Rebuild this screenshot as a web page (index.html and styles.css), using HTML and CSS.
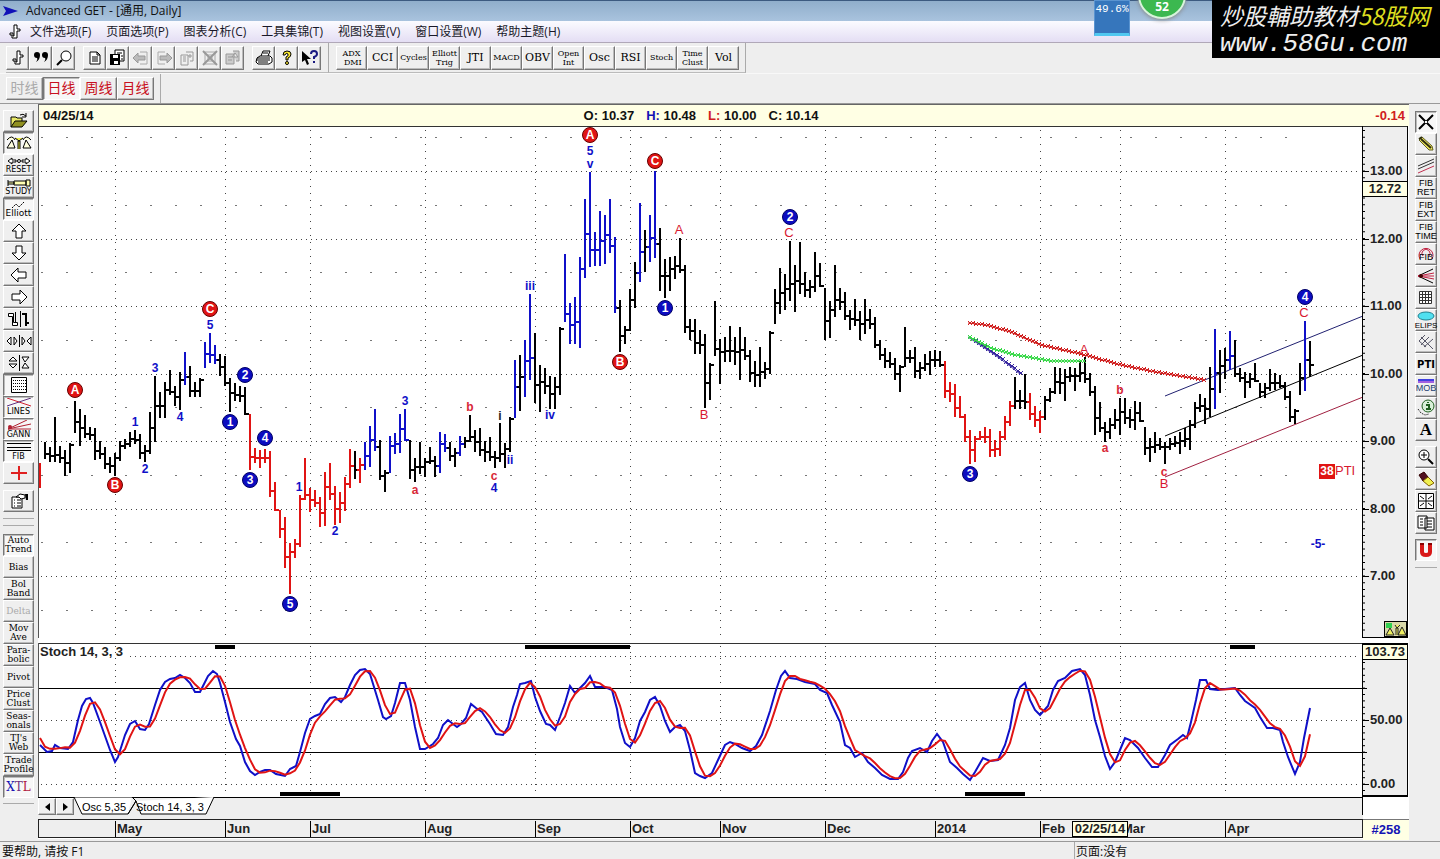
FILE: index.html
```html
<!DOCTYPE html>
<html lang="zh-CN">
<head>
  <meta charset="UTF-8">
  <title>Advanced GET - [通用, Daily]</title>
  <link rel="stylesheet" href="styles.css">
</head>
<body>
  <header class="titlebar">
    <svg width="16" height="10" viewBox="0 0 16 10"><path d="M0 0L15 5L0 10L3 5Z" fill="#1010b8"/></svg>
    <span>Advanced GET - [通用, Daily]</span>
  </header>

  <nav class="menu">
    <svg class="logo" width="12" height="16" viewBox="0 0 12 16"><path d="M5 1H8V5H11V7H8V14H3V11H1V9H4V12H5Z" fill="#fff" stroke="#000"/></svg>
    <a href="#">文件选项(F)</a>
    <a href="#">页面选项(P)</a>
    <a href="#">图表分析(C)</a>
    <a href="#">工具集锦(T)</a>
    <a href="#">视图设置(V)</a>
    <a href="#">窗口设置(W)</a>
    <a href="#">帮助主题(H)</a>
  </nav>

  <!-- floating widgets -->
  <div class="meter">49.6%</div>
  <div class="ball">52</div>
  <div class="watermark">
    <div class="wm-cn">炒股輔助教材<b>58股网</b></div>
    <div class="wm-url">www.58Gu.com</div>
  </div>

  <div class="toolbar">
    <div class="group main-group">
      <div class="set">
        <button aria-label="Chart"><svg width="18" height="18" viewBox="0 0 18 18"><path d="M8 2H11V6H14V8H11V15H6V12H4V10H7V13H8Z" fill="#fff" stroke="#000"/></svg></button>
        <button aria-label="Quote"><svg width="18" height="18" viewBox="0 0 18 18"><path d="M2 6a3 3 0 1 1 6 0Q8 11 4 13Q6 10 5 9Q2 9 2 6ZM10 6a3 3 0 1 1 6 0Q16 11 12 13Q14 10 13 9Q10 9 10 6Z"/></svg></button>
        <button aria-label="Find"><svg width="18" height="18" viewBox="0 0 18 18"><circle cx="11" cy="7" r="5" fill="#fff" stroke="#000"/><path d="M7 11L2 16" stroke="#000" stroke-width="2"/></svg></button>
      </div>
      <div class="set">
        <button aria-label="New"><svg width="18" height="18" viewBox="0 0 18 18"><path d="M4 3H11L14 6V15H4ZM11 3V6H14M6 8H12M6 10H12M6 12H12" fill="#fff" stroke="#000"/></svg></button>
        <button aria-label="Save"><svg width="18" height="18" viewBox="0 0 18 18"><path d="M6 1H15V12H6Z" fill="#fff" stroke="#000"/><path d="M1 5H11V16H1Z"/><path d="M4 6H9V9H4ZM5 12H9V15H5Z" fill="#fff"/><path d="M8 4H13M12 7H14M12 10H14" stroke="#000"/></svg></button>
        <button aria-label="Back" disabled><svg width="18" height="18" viewBox="0 0 18 18"><path d="M8 3H15V15H8" fill="none" stroke="#aaa"/><path d="M1 9L6 4V7H13V11H6V14Z" fill="#bbb" stroke="#999"/></svg></button>
        <button aria-label="Forward" disabled><svg width="18" height="18" viewBox="0 0 18 18"><path d="M10 3H3V15H10" fill="none" stroke="#aaa"/><path d="M17 9L12 4V7H5V11H12V14Z" fill="#bbb" stroke="#999"/></svg></button>
        <button aria-label="Copy page" disabled><svg width="18" height="18" viewBox="0 0 18 18"><path d="M3 6H10V16H3ZM5 8H8M5 10H8M5 12H8M8 3H15V12H12M12 5V9M10 7H14" fill="none" stroke="#999"/></svg></button>
        <button aria-label="Delete page" disabled><svg width="18" height="18" viewBox="0 0 18 18"><path d="M4 3H14V15H4ZM6 6H12M6 9H12M6 12H12" fill="none" stroke="#aaa"/><path d="M2 2L16 16M16 2L2 16" stroke="#999" stroke-width="2"/></svg></button>
        <button aria-label="Page" disabled><svg width="18" height="18" viewBox="0 0 18 18"><path d="M2 5H10V15H2ZM4 8H8M4 11H8M9 2H15V12H12M11 4L8 8H14Z" fill="#ccc" stroke="#999"/></svg></button>
      </div>
      <div class="set">
        <button aria-label="Print"><svg width="18" height="18" viewBox="0 0 18 18"><path d="M6 7L8 2H15L13 7M2 9L5 7H15L17 9V13L14 15H3L1 13Z" fill="#fff" stroke="#000"/><path d="M1 11H15M3 13H13M8 4H13M2 9H15" stroke="#000"/></svg></button>
        <button aria-label="Help"><svg width="18" height="18" viewBox="0 0 18 18"><path d="M5 6Q5 2 9 2Q13 2 13 5Q13 8 10 9V11H8V8Q11 7 10 5Q8 3 7 6Z" fill="#ffee30" stroke="#000"/><circle cx="9" cy="14" r="1.500" fill="#ffee30" stroke="#000"/></svg></button>
        <button aria-label="What is this"><svg width="18" height="18" viewBox="0 0 18 18"><path d="M1 2V13L4 11L6 16L8 15L6 10H10Z"/><path d="M10 5Q10 2 13 2Q16 2 16 5Q16 7 13 8V10M13 12V14" fill="none" stroke="#1a1a80" stroke-width="2"/></svg></button>
      </div>
    </div>
    <div class="group study-group">
      <button>ADX<br>&nbsp;DMI</button>
      <button class="big">CCI</button>
      <button>Cycles</button>
      <button>Elliott<br>Trig</button>
      <button class="big">JTI</button>
      <button>MACD</button>
      <button class="big">OBV</button>
      <button>Open<br>Int</button>
      <button class="big">Osc</button>
      <button class="big">RSI</button>
      <button>Stoch</button>
      <button>Time<br>Clust</button>
      <button class="big">Vol</button>
    </div>
  </div>

  <div class="toolbar periods">
    <div class="group">
      <button disabled>时线</button>
      <button class="pressed">日线</button>
      <button>周线</button>
      <button>月线</button>
    </div>
  </div>

  <main>
    <aside class="left">
      <div class="stack">
        <button aria-label="Open"><svg width="24" height="18" viewBox="0 0 24 18"><path d="M4 15V5H9L10 6H15V9" fill="#e8e868" stroke="#000"/><path d="M4 15L8 9H20L15 15Z" fill="#909020" stroke="#000"/><path d="M13 3Q16 1 19 4M19 1V5H15" fill="none" stroke="#000"/></svg></button>
        <button class="pressed" aria-label="Trees"><svg width="26" height="18" viewBox="0 0 26 18"><path d="M1 14L6 6L9 14ZM17 14L20 6L25 14ZM1 6Q6 0 9 6M17 6Q20 0 25 6" fill="#ffffe0" stroke="#000"/><path d="M9 4L13 7L17 4M12 15V7H14V15" fill="#e8e840" stroke="#000"/></svg></button>
        <button><svg width="24" height="8" viewBox="0 0 24 8"><path d="M1 4L5 1V3H9V5H5V7ZM23 4L19 1V3H15V5H19V7Z" fill="#fff" stroke="#000"/><circle cx="12" cy="4" r="1.500" fill="none" stroke="#000"/></svg><small>RESET</small></button>
        <button><svg width="24" height="8" viewBox="0 0 24 8"><path d="M1 1V7M1 3H7V5H1M7 2H19V6H7ZM19 1H23V7H19Z" fill="#ffffb0" stroke="#000"/></svg><small>STUDY</small></button>
        <button class="pressed"><svg width="24" height="8" viewBox="0 0 24 8"><path d="M5 7L9 3L12 6L17 1" fill="none" stroke="#000" stroke-dasharray="2 1"/></svg><small class="low">Elliott</small></button>
        <button aria-label="Up"><svg width="18" height="16" viewBox="0 0 18 16"><path d="M9 1L16 8H12V15H6V8H2Z" fill="#fff" stroke="#000"/></svg></button>
        <button aria-label="Down"><svg width="18" height="16" viewBox="0 0 18 16"><path d="M9 15L16 8H12V1H6V8H2Z" fill="#fff" stroke="#000"/></svg></button>
        <button aria-label="Left"><svg width="18" height="16" viewBox="0 0 18 16"><path d="M1 8L8 1V5H16V11H8V15Z" fill="#fff" stroke="#000"/></svg></button>
        <button aria-label="Right"><svg width="18" height="16" viewBox="0 0 18 16"><path d="M17 8L10 1V5H2V11H10V15Z" fill="#fff" stroke="#000"/></svg></button>
        <button aria-label="Bar style"><svg width="24" height="18" viewBox="0 0 24 18"><path d="M1.500 3.500H6.500V12.500H10.500V15.500H5.500V6.500H1.500ZM8.500 2V12M13.500 1V17" fill="#fff" stroke="#000"/><path d="M19 3V16M15 4H19M19 13H22" fill="none" stroke="#000" stroke-width="2"/></svg></button>
        <button aria-label="Bar spacing"><svg width="26" height="12" viewBox="0 0 26 12"><path d="M5 2V10L1 6ZM8 2V10L11 6ZM13.500 0V12M16 2V10L19 6ZM25 2V10L21 6Z" fill="#fff" stroke="#000"/></svg></button>
        <button aria-label="Bar height"><svg width="24" height="16" viewBox="0 0 24 16"><path d="M2 6H10L6 2ZM2 9H10L6 13ZM12.500 0V16M15 2H22L18 7ZM15 13H22L18 8Z" fill="#fff" stroke="#000"/></svg></button>
        <button class="pressed" aria-label="Grid"><svg width="18" height="18" viewBox="0 0 18 18"><path d="M1.500 1.500H16.500V16.500H1.500Z" fill="#fff" stroke="#000"/><path d="M3 4.500H16M3 7.500H16M3 10.500H16M3 13.500H16" stroke="#000" stroke-dasharray="1 1"/></svg></button>
        <button class="pressed"><svg width="24" height="9" viewBox="0 0 24 9"><path d="M0 0L24 8" stroke="#d02030"/><path d="M0 8L24 0" stroke="#603080"/></svg><small>LINES</small></button>
        <button class="pressed"><svg width="24" height="10" viewBox="0 0 24 10"><path d="M1 9L20 0M1 9L24 4M1 9H24" stroke="#b02030"/><circle cx="3" cy="7" r="2" fill="#b02030"/></svg><small>GANN</small></button>
        <button class="pressed"><svg width="24" height="10" viewBox="0 0 24 10"><path d="M0 1.500H24M0 5.500H24M0 8.500H24" stroke="#000"/></svg><small>FIB</small></button>
        <button aria-label="Crosshair"><svg width="18" height="16" viewBox="0 0 18 16"><path d="M9 1V15M1 8H17" stroke="#e02020" stroke-width="2"/></svg></button>
      </div>
      <div class="stack props">
        <button aria-label="Properties"><svg width="20" height="18" viewBox="0 0 20 18"><path d="M3 5H13V16H3ZM5 8H6M8 8H12M5 11H6M8 11H12M5 14H6M8 14H12" fill="#fff" stroke="#000"/><path d="M7 5L11 2L16 3V6L12 7L10 5Z" fill="#fff" stroke="#000"/><path d="M16 2H19V8H17Z"/></svg></button>
      </div>
      <div class="stack studies">
        <button class="pressed">Auto<br>Trend</button>
        <button>Bias</button>
        <button>Bol<br>Band</button>
        <button disabled>Delta</button>
        <button>Mov<br>Ave</button>
        <button>Para-<br>bolic</button>
        <button>Pivot</button>
        <button>Price<br>Clust</button>
        <button>Seas-<br>onals</button>
        <button>TJ's<br>Web</button>
        <button>Trade<br>Profile</button>
        <button class="pressed xtl"><span><i>X</i><b>T</b>L</span></button>
      </div>
    </aside>

    <section class="charts">
      <div class="quote">
        <span>04/25/14</span>
        <div class="ohlc"><span>O: 10.37</span><span><b class="blue">H:</b> 10.48</span><span><b class="red">L:</b> 10.00</span><span>C: 10.14</span></div>
        <span class="change red">-0.14</span>
      </div>
      <svg id="price" viewBox="38 126 1325 517"></svg>
      <svg id="priceAxis" viewBox="1363 126 46 517"></svg>
      <svg id="stoch" viewBox="38 643 1325 154"></svg>
      <svg id="stochAxis" viewBox="1363 643 46 154"></svg>
      <div class="tabs">
        <svg class="tab-shape" width="180" height="18" viewBox="0 0 180 18"><path d="M36 0L44 17H90L98 4L94 0ZM94 0L98 4L90 17M98 4L103 17H168L176 0" fill="#fff" stroke="#000"/></svg>
        <button class="arrow" aria-label="Previous"><svg width="5" height="8" viewBox="0 0 5 8"><path d="M5 0V8L0 4Z"/></svg></button>
        <button class="arrow" aria-label="Next"><svg width="5" height="8" viewBox="0 0 5 8"><path d="M0 0V8L5 4Z"/></svg></button>
        <button class="tab">Osc 5,35</button>
        <button class="tab">Stoch 14, 3, 3</button>
      </div>
      <div class="tab-side"></div>
      <svg id="time" viewBox="38 819 1325 20"></svg>
      <div class="barno">#258</div>
    </section>

    <aside class="right">
      <div class="stack">
        <button class="pressed" aria-label="Close"><svg width="18" height="18" viewBox="0 0 18 18"><path d="M2 2L16 16M16 2L2 16" stroke="#000" stroke-width="2"/><path d="M8 9H10" stroke="#fff" stroke-width="2"/></svg></button>
        <button aria-label="Pencil"><svg width="18" height="18" viewBox="0 0 18 18"><path d="M2 5L5 2L15 11L16 15L12 15Z" fill="#f0e860" stroke="#606020"/><path d="M2 4L5 2M4 4L14 13" stroke="#303010" stroke-width="2"/></svg></button>
        <button aria-label="Parallel lines"><svg width="18" height="18" viewBox="0 0 18 18"><path d="M1 9L17 2M1 12L17 5" stroke="#333"/><path d="M1 16L17 9" stroke="#c03050"/></svg></button>
        <button class="fib">FIB<br>RET</button>
        <button class="fib">FIB<br>EXT</button>
        <button class="fib">FIB<br>TIME</button>
        <button aria-label="Fibonacci circle"><svg width="18" height="18" viewBox="0 0 18 18"><path d="M3 14A7 7 0 1 1 15 14M6 11A4 4 0 1 1 12 11" fill="none" stroke="#c02040"/><text class="fib-mark" x="9" y="15">FIB</text></svg></button>
        <button aria-label="Gann fan"><svg width="18" height="18" viewBox="0 0 18 18"><path d="M1 9L16 2M1 9L16 16" stroke="#000"/><path d="M1 9L17 6M1 9H17M1 9L17 12" stroke="#c02040"/><circle cx="4" cy="9" r="2" fill="#400"/></svg></button>
        <button aria-label="Grid tool"><svg width="18" height="18" viewBox="0 0 18 18"><path d="M2.500 2.500H14.500V14.500H2.500ZM5.500 3V15M8.500 3V15M11.500 3V15M3 5.500H15M3 8.500H15M3 11.500H15" fill="#fff" stroke="#333"/></svg></button>
        <button><svg width="18" height="10" viewBox="0 0 18 10"><ellipse cx="9" cy="5" rx="8" ry="4" fill="#50e0f0" stroke="#208090"/></svg><small>ELIPS</small></button>
        <button aria-label="Pitchfork"><svg width="18" height="18" viewBox="0 0 18 18"><path d="M2 8L8 2M4 12L12 4M7 14L16 6M4 4L16 16M2 8L9 14" fill="none" stroke="#556"/></svg></button>
        <button class="pti">PTI</button>
        <button><svg width="16" height="4" viewBox="0 0 16 4"><path d="M0 0H16V4H0Z" fill="#4040e0"/><path d="M0 2H16V4H0Z" fill="#a060e0"/></svg><small class="mob">MOB</small></button>
        <button aria-label="Info"><svg width="18" height="18" viewBox="0 0 18 18"><circle cx="11" cy="7" r="6" fill="#d8f0d8" stroke="#206020"/><path d="M9 6H12V10M9 10H14M11 3V4" fill="none" stroke="#206020" stroke-width="2"/><path d="M1 10L4 14L8 16L12 15" fill="none" stroke="#000" stroke-dasharray="1 1"/></svg></button>
        <button class="letter">A</button>
      </div>
      <div class="stack">
        <button aria-label="Zoom"><svg width="18" height="18" viewBox="0 0 18 18"><circle cx="7" cy="7" r="5" fill="#fff" stroke="#000"/><path d="M4 7H10M7 4V10" stroke="#000"/><path d="M11 11L16 16" stroke="#000" stroke-width="2"/></svg></button>
        <button aria-label="Eraser"><svg width="18" height="18" viewBox="0 0 18 18"><path d="M2 5L7 2L11 7L6 11Z" fill="#501020" stroke="#300"/><path d="M6 11L11 7L17 13L12 16Z" fill="#f0f050" stroke="#806000"/></svg></button>
        <button aria-label="Arrange"><svg width="18" height="18" viewBox="0 0 18 18"><path d="M1.500 1.500H16.500V16.500H1.500ZM9 2V16M2 9H16M3 4L7 7M15 4L11 7M3 14L7 11M15 14L11 11" fill="#fff" stroke="#000"/></svg></button>
        <button aria-label="Duplicate"><svg width="18" height="18" viewBox="0 0 18 18"><path d="M1 2H10V14H1ZM8 4H17V16H8ZM3 5H6M3 8H6M3 11H6M10 7H15M10 10H15M10 13H15" fill="#fff" stroke="#000"/></svg></button>
      </div>
      <div class="stack">
        <button class="pressed" aria-label="Magnet"><svg width="18" height="18" viewBox="0 0 18 18"><path d="M5 2V11Q5 14 9 14Q13 14 13 11V2" fill="none" stroke="#d81818" stroke-width="4"/><path d="M3 3H7M11 3H15" stroke="#800" stroke-width="2"/></svg></button>
      </div>
    </aside>
  </main>

  <footer>
    <span>要帮助, 请按 F1</span>
    <span class="page">页面:没有</span>
  </footer>

  <script src="chart.js"></script>
</body>
</html>
```
FILE: styles.css
```css
* { box-sizing: border-box; }
body {
  margin: 0;
  background: #eee;
  color: #111;
  font-family: "Open Sans", "Noto Sans CJK SC", sans-serif;
  font-size: 12px;
  line-height: 16px;
}
button {
  font-family: inherit;
  color: #000;
  background: #efefef;
  border: 1px solid;
  border-color: #fff #777 #777 #fff;
  box-shadow: inset -1px -1px #bbb;
  padding: 0;
  margin: 0;
  display: flex;
  align-items: center;
  justify-content: center;
}
button.pressed {
  background: #f7f7f7;
  border-color: #777 #fff #fff #777;
  box-shadow: inset 1px 1px #bbb;
}
button:disabled { color: #aaa; }
.blue { color: #1414b4; }
.red { color: #d02020; }

.titlebar {
  height: 21px;
  padding: 0 3px;
  display: flex;
  align-items: center;
  gap: 7px;
  border-top: 1px solid #3c5a80;
  background: linear-gradient(#90aecb, #a9c3de);
}
.menu {
  height: 22px;
  padding-left: 9px;
  display: flex;
  align-items: center;
  gap: 15px;
  background: linear-gradient(#fbfbff, #e4def4);
  border-bottom: 1px solid #b0a8b8;
}
.menu a { color: #181828; text-decoration: none; }
.menu .logo { margin-right: -6px; }

/* floating widgets */
.meter {
  position: absolute;
  top: 0;
  right: 310px;
  width: 36px;
  height: 36px;
  background: #3676bc;
  border: 1px solid #5a94d0;
  border-bottom: 3px solid #50c8f0;
  color: #fff;
  font-family: "Liberation Mono", monospace;
  font-size: 11px;
  text-align: center;
}
.ball {
  position: absolute;
  top: -29px;
  right: 254px;
  width: 48px;
  height: 48px;
  padding-top: 26px;
  border-radius: 50%;
  background: #3cb850;
  border: 2px solid #d8f4dc;
  box-shadow: 0 1px 4px #888;
  color: #fff;
  font-weight: bold;
  text-align: center;
}
.watermark {
  position: absolute;
  top: 0;
  right: 0;
  width: 228px;
  height: 58px;
  padding: 0 8px;
  background: #000;
  color: #eee;
  font-style: italic;
  white-space: nowrap;
}
.wm-cn { font-family: "Noto Sans CJK TC", sans-serif; font-size: 23px; line-height: 31px; }
.wm-cn b { color: #e0e020; font-weight: normal; }
.wm-url { font-family: "Liberation Mono", monospace; font-size: 26px; line-height: 27px; }

.toolbar {
  height: 30px;
  display: flex;
  padding-left: 6px;
}
.group { display: flex; align-items: center; border-right: 1px solid #aaa; }
.toolbar .group button { height: 24px; }
.main-group { gap: 8px; padding-right: 7px; border-bottom: 1px solid #bbb; }
.set { display: flex; }
.set button { width: 23px; }
.study-group {
  padding: 0 6px 0 7px;
  border-bottom: 1px solid #bbb;
  font-family: "DejaVu Serif", serif;
}
.study-group button { width: 31px; font-size: 8px; line-height: 9px; }
.study-group .big { font-size: 11px; }
.periods { height: 31px; border-bottom: 1px solid #999; border-top: 1px solid #f8f8f8; }
.periods .group { padding-right: 6px; }
.periods .group button { width: 37px; height: 23px; font-size: 14px; line-height: 20px; padding-bottom: 2px; color: #c81020; }
.periods .group button:disabled { color: #aaa; }

main {
  display: grid;
  grid-template-columns: 38px 1fr 31px;
}
.left { padding: 6px 4px 0 3px; }
.right { padding: 7px 3px 0 6px; }
.stack button { width: 100%; height: 22px; flex-direction: column; }
.stack small { font-family: "DejaVu Sans", sans-serif; font-size: 8px; line-height: 9px; }
.right .stack small { font-family: "Liberation Sans", sans-serif; font-size: 8px; }
.stack .low { font-size: 9px; }
.props { padding: 6px 0; border-bottom: 1px solid #aaa; }
.studies { margin-top: 6px; padding: 8px 0 5px; border-top: 1px solid #aaa; border-bottom: 1px solid #aaa; }
.studies button { font-family: "DejaVu Serif", serif; font-size: 9px; line-height: 9px; }
.studies .xtl { font-size: 12px; }
.xtl span { color: #b02040; }
.xtl i { color: #1414b4; font-style: normal; }
.xtl b { color: #703080; font-weight: normal; }
.right .stack + .stack { margin-top: 5px; }
.right .stack:last-child { padding-bottom: 6px; border-bottom: 1px solid #aaa; }
.right .fib { font-family: "Liberation Sans", sans-serif; font-size: 9px; line-height: 9px; }
.right .pti { font-family: "DejaVu Sans", sans-serif; font-size: 10px; font-weight: bold; }
.right .stack .mob { font-size: 9px; line-height: 11px; color: #1a4070; }
.right .letter { font-family: "Liberation Serif", serif; font-size: 17px; font-weight: bold; }

.charts {
  display: grid;
  grid-template-columns: 1fr 46px;
  align-content: start;
  font-family: "Liberation Sans", sans-serif;
}
.charts > svg { display: block; width: 100%; height: auto; background: #fff; }
.quote {
  grid-column: 1 / 3;
  height: 22px;
  display: grid;
  grid-template-columns: 1fr auto 1fr 46px;
  align-items: center;
  padding: 0 4px;
  background: #ffffe4;
  border: solid #666;
  border-width: 1px 0 0 1px;
  font-size: 13px;
  font-weight: bold;
}
.ohlc { display: flex; gap: 12px; }
.change { grid-column: 3 / 5; text-align: right; }
svg text { font-weight: bold; font-size: 13px; }
#price text { font-size: 12px; }
#price .thin { font-size: 13px; font-weight: normal; }
svg .fib-mark {
  font-family: "Liberation Sans", sans-serif;
  font-size: 9px;
  font-weight: normal;
  text-anchor: middle;
}

.tabs {
  position: relative;
  display: flex;
  height: 18px;
  border-top: 1px solid #000;
  border-right: 1px solid #000;
  margin-bottom: 4px;
}
.tab-shape { position: absolute; left: 0; top: -1px; }
.tabs button { position: relative; height: 17px; }
.tabs .arrow { width: 18px; }
.tabs .tab {
  border: 0;
  background: none;
  box-shadow: none;
  font-size: 11px;
}
.tab:nth-of-type(3) { margin-left: 8px; }
.tab:nth-of-type(4) { margin-left: 10px; }
.tab-side { background: #fff; }
.barno {
  background: #ffffe4;
  border-top: 1px solid #777;
  color: #1414b4;
  font-size: 13px;
  line-height: 20px;
  font-weight: bold;
  text-align: center;
}

footer {
  display: grid;
  grid-template-columns: 1fr 366px;
  height: 19px;
  margin-top: 1px;
  padding-left: 2px;
  border-top: 1px solid #999;
  line-height: 20px;
}
.page { border-left: 1px solid #aaa; padding-left: 1px; }
```
FILE: chart.js
```js
const BLUE = "#1010c8", RED = "#e01414", BLACK = "#000";
const months = [[115, "May"], [225, "Jun"], [310, "Jul"], [425, "Aug"], [535, "Sep"], [630, "Oct"],
  [720, "Nov"], [825, "Dec"], [935, "2014"], [1040, "Feb"], [1120, "Mar"], [1225, "Apr"]];

const line = (x1, y1, x2, y2, c = BLACK, w = 1, dash = "") =>
  `<line x1="${x1}" y1="${y1}" x2="${x2}" y2="${y2}" stroke="${c}" stroke-width="${w}" stroke-dasharray="${dash}"/>`;
const text = (x, y, s, c = BLACK, anchor = "middle", cls = "") =>
  `<text class="${cls}" x="${x}" y="${y + 4}" fill="${c}" text-anchor="${anchor}">${s}</text>`;
const box = (x, y, w, h, fill, stroke = "none") =>
  `<rect x="${x}" y="${y}" width="${w}" height="${h}" fill="${fill}" stroke="${stroke}"/>`;
const put = (id, s) => document.getElementById(id).innerHTML = s;

// y of a price level
const py = p => Math.round(171 + (13 - p) * 67.5);

// high and low of every bar, one bar each 5 units, k/b/r sets the colour from there on
const bars = `k 442 459 447 462 417 462 446 463 450 476 443 473 401 433 409 446 415 438 427 440 428 460 441 459
447 469 457 473 453 476 441 461 439 449 432 447 430 444 434 459 445 462 412 454 376 442 392 418 382 418 370 395
386 406 372 410 b 352 385 k 366 397 382 397 378 397 b 342 368 333 363 345 364 k 354 376 356 386 378 412 383 401
386 402 387 415 r 414 470 448 463 450 468 449 463 451 497 482 511 510 538 517 568 543 594 539 558 495 547 458 500
488 512 490 507 497 527 472 526 463 500 486 525 492 523 477 511 449 488 k 451 479 r 458 483 b 442 470 426 467
409 451 k 440 480 470 492 b 436 473 433 454 414 453 409 441 k 440 479 458 482 442 474 458 477 447 464 456 477
b 432 473 434 452 k 442 461 448 467 b 436 456 k 437 448 415 442 430 452 428 456 441 462 437 461 451 468 423 462
443 468 417 452 b 360 418 k 355 411 b 340 397 294 380 k 333 403 365 412 368 394 376 409 377 409 327 395
b 254 322 303 344 297 344 257 348 199 278 172 267 232 266 211 266 215 264 199 253 237 313 k 300 352 326 344
289 331 262 308 b 203 282 k 230 272 b 215 262 171 258 k 228 291 259 298 257 291 256 279 238 273 265 333 319 340
319 354 330 354 334 408 363 400 301 356 339 384 337 362 326 362 337 365 327 380 337 360 350 382 361 387 347 387
362 379 331 374 289 324 268 314 274 310 241 301 265 312 242 294 272 297 280 298 252 292 263 287 288 340 301 338
265 317 288 310 292 320 310 330 299 326 311 340 299 334 309 329 317 348 340 360 348 368 352 368 358 380 365 392
327 367 350 363 347 378 362 379 354 371 351 375 350 367 351 367 r 361 398 382 402 384 417 396 418 414 442 430 464
436 462 431 440 427 443 429 457 440 457 431 456 416 440 401 426 k 377 409 390 409 374 409 r 393 420 406 427
411 433 k 396 420 388 402 367 394 368 394 369 401 367 382 368 391 361 382 357 383 373 396 386 435 402 432 422 442
418 439 409 429 398 435 398 424 409 428 401 430 402 422 427 455 438 462 432 453 438 450 442 464 438 450 436 447
432 454 428 447 420 450 402 428 394 412 398 424 367 417 b 329 409 k 350 393 348 379 b 331 370 k 340 377 368 382
372 398 373 388 363 382 383 398 383 398 369 391 373 390 375 388 382 400 391 422 409 424 363 395 b 321 391
k 341 377`.split(/\s+/);

function readBars() {
  const out = [];
  let colour = BLACK, x = 45;
  for (let i = 0; i < bars.length; i++) {
    if (isNaN(bars[i])) { colour = { k: BLACK, b: BLUE, r: RED }[bars[i]]; continue; }
    out.push({ x, hi: +bars[i], lo: +bars[++i], colour });
    x += 5;
  }
  return out;
}

function drawBars() {
  const list = readBars();
  let s = box(39, 463, 2, 25, RED), last = 448;
  list.forEach((b, i) => {
    const n = list[i + 1] || { hi: b.hi + 10, lo: b.lo };
    const mid = (Math.max(b.hi, n.hi) + Math.min(b.lo, n.lo)) / 2;
    const close = Math.round(Math.min(Math.max(mid, b.hi + 1), b.lo - 2));
    s += box(b.x - 1, b.hi, 2, b.lo - b.hi, b.colour);
    s += box(b.x + 1, close, 3, 2, b.colour);
    // no opening tick when the bar gaps away from the last close
    if (last >= b.hi && last <= b.lo - 2 && i % 2) s += box(b.x - 3, last, 2, 2, b.colour);
    last = close;
  });
  return s;
}

// value of a polyline at x
function at(pts, x) {
  if (x <= pts[0][0]) return pts[0][1];
  for (let i = 1; i < pts.length; i++) {
    const [x0, y0] = pts[i - 1], [x1, y1] = pts[i];
    if (x <= x1) return y0 + (y1 - y0) * (x - x0) / (x1 - x0);
  }
  return pts[pts.length - 1][1];
}

function crosses(pts, c) {
  let s = `<polyline points="${pts.join(" ")}" fill="none" stroke="${c}"/>`;
  for (let x = pts[0][0]; x <= pts[pts.length - 1][0]; x += 3) {
    const y = Math.round(at(pts, x));
    s += `<path d="M${x} ${y - 2}l4 4m0 -4l-4 4" stroke="${c}" stroke-width="1"/>`;
  }
  return s;
}

function drawPrice() {
  let s = "";
  for (let p = 13; p >= 7; p--) s += line(41, py(p) + .5, 1360, py(p) + .5, "#444", 1, "1 4");
  months.forEach(([x], i) => {
    s += line(x + .5, 130, x + .5, 640, "#444", 1, "1 6");
    const end = months[i + 1] ? months[i + 1][0] : 1310;
    for (let p = 13.5; p > 6; p--) {
      s += line(x + 10, py(p) + .5, end, py(p) + .5, "#777", 1, "2 23");
      if (!i) s += line(41, py(p) + .5, 112, py(p) + .5, "#777", 1, "2 23");
    }
  });
  s += line(1165, 396, 1363, 316, "#202070") + line(1165, 436, 1363, 355) + line(1165, 477, 1363, 397, "#a02040");
  s += drawBars();
  s += crosses([[968, 337], [995, 355], [1010, 366], [1020, 374]], "#3828a0");
  s += crosses([[968, 337], [990, 348], [1010, 354], [1050, 361], [1082, 361]], "#38d848");
  s += crosses([[968, 323], [985, 325], [1010, 332], [1040, 345], [1080, 354], [1120, 365], [1160, 373], [1204, 380]], "#d02020");

  const waves = [["A", 75, 390], ["B", 115, 485], ["C", 210, 309], ["A", 590, 135], ["B", 620, 362], ["C", 655, 161],
    ["1", 230, 422], ["2", 245, 375], ["3", 250, 480], ["4", 265, 438], ["5", 290, 604], ["1", 665, 308],
    ["2", 790, 217], ["3", 970, 474], ["4", 1305, 297]];
  waves.forEach(([t, x, y]) => {
    const c = isNaN(t) ? RED : "#0c0cc0";
    s += `<circle cx="${x}" cy="${y}" r="7.5" fill="${c}" stroke="${isNaN(t) ? "#600" : "#006"}"/>` + text(x, y, t, "#fff");
  });
  const blue = [["1", 135, 422], ["2", 145, 469], ["3", 155, 368], ["4", 180, 417], ["5", 210, 325], ["1", 299, 487],
    ["2", 335, 531], ["3", 405, 401], ["4", 494, 488], ["ii", 510, 460], ["iii", 530, 286], ["iv", 550, 415],
    ["5", 590, 151], ["v", 590, 164], ["-5-", 1318, 544]];
  blue.forEach(([t, x, y]) => s += text(x, y, t, BLUE));
  const red = [["b", 470, 407], ["a", 415, 490], ["c", 494, 476], ["a", 1105, 448], ["b", 1120, 390], ["c", 1164, 472]];
  red.forEach(([t, x, y]) => s += text(x, y, t, "#d82838"));
  const caps = [["A", 679, 230], ["B", 704, 415], ["C", 789, 233], ["A", 1084, 350], ["B", 1164, 484], ["C", 1304, 313]];
  caps.forEach(([t, x, y]) => s += text(x, y, t, "#d81830", "middle", "thin"));
  s += text(500, 416, "i", "#222");
  s += box(1319, 464, 16, 15, RED) + text(1327, 471, "38", "#fff") + text(1335, 471, "PTI", "#d81830", "start", "thin");
  s += box(38, 126, 1325, 1, "#333") + box(38, 126, 1, 512, "#555") + box(1362, 126, 1, 512, BLACK);
  put("price", s);
}

function drawPriceAxis() {
  let s = box(1363, 127, 44, 510, "#eee");
  for (let y = 130.5; y < 636; y += 6.75) s += line(1363, y, 1365, y);
  for (let p = 13; p >= 7; p--) s += line(1363, py(p) + .5, 1369, py(p) + .5) + text(1370, py(p), p + ".00", "#222", "start");
  s += box(1362.5, 181.5, 45, 15, "#ffffe4", BLACK) + text(1385, 189, "12.72", "#222");
  s += box(1363, 126, 45, 1, "#333") + box(1407, 126, 1, 512, BLACK) + box(1363, 637, 45, 1, BLACK);
  // tree badge in the corner
  s += box(1384.5, 621.5, 22, 15, "#d8d8a8", BLACK) + box(1386, 623, 6, 5, "#30d050");
  s += `<path d="M1386 635L1390 628L1394 635ZM1398 635L1402 627L1406 635ZM1395 625L1397 628L1400 625M1396 635V628H1398V635" fill="#f0f060" stroke="#222"/>`;
  put("priceAxis", s);
}

const k = [[40, 745], [47, 752], [52, 751], [55, 745], [60, 748], [68, 749], [73, 742], [78, 720], [82, 706], [86, 699],
  [90, 698], [93, 703], [100, 722], [110, 750], [115, 762], [118, 757], [125, 735], [130, 724], [135, 721], [140, 729],
  [145, 730], [149, 724], [155, 705], [160, 690], [165, 682], [170, 679], [175, 678], [180, 675], [185, 678], [190, 683],
  [195, 692], [200, 692], [203, 686], [208, 676], [213, 671], [217, 674], [220, 683], [225, 702], [230, 722], [236, 739],
  [240, 746], [245, 762], [250, 771], [255, 775], [260, 772], [265, 770], [270, 770], [276, 774], [285, 776], [290, 769],
  [296, 766], [300, 752], [305, 733], [310, 719], [315, 716], [320, 714], [325, 704], [330, 698], [335, 697], [341, 702],
  [345, 697], [350, 685], [355, 675], [360, 670], [365, 669], [370, 674], [374, 687], [378, 700], [383, 717], [386, 719],
  [391, 716], [395, 703], [400, 683], [405, 683], [410, 700], [415, 727], [420, 749], [425, 749], [433, 744], [438, 738],
  [443, 725], [448, 720], [453, 724], [457, 727], [461, 724], [466, 718], [471, 704], [476, 708], [482, 712], [490, 724],
  [496, 734], [503, 735], [508, 727], [513, 707], [517, 695], [520, 684], [525, 683], [531, 681], [535, 697], [540, 711],
  [546, 724], [550, 725], [555, 730], [560, 717], [565, 703], [570, 686], [575, 693], [580, 688], [585, 683], [590, 676],
  [595, 687], [605, 687], [612, 690], [617, 709], [620, 727], [625, 743], [630, 747], [635, 738], [640, 721], [645, 712],
  [650, 700], [655, 697], [660, 706], [665, 721], [670, 732], [675, 727], [680, 725], [685, 731], [690, 750], [695, 773],
  [700, 776], [705, 778], [712, 773], [718, 760], [725, 745], [730, 742], [735, 744], [742, 748], [750, 751], [756, 746],
  [762, 735], [770, 711], [776, 690], [781, 676], [785, 671], [790, 678], [797, 679], [805, 682], [815, 684], [820, 690],
  [827, 693], [832, 705], [840, 722], [845, 745], [850, 748], [855, 757], [862, 753], [868, 762], [875, 768], [882, 775],
  [890, 779], [898, 779], [903, 772], [908, 758], [912, 751], [920, 748], [927, 752], [932, 741], [937, 734], [943, 742],
  [950, 762], [957, 768], [963, 774], [970, 780], [975, 772], [983, 758], [990, 761], [998, 760], [1005, 745], [1010, 728],
  [1015, 700], [1020, 687], [1025, 683], [1030, 700], [1035, 710], [1040, 715], [1048, 706], [1053, 690], [1058, 681],
  [1065, 678], [1072, 671], [1080, 669], [1085, 675], [1090, 695], [1095, 720], [1100, 737], [1105, 756], [1110, 769],
  [1115, 762], [1120, 750], [1125, 738], [1130, 740], [1138, 748], [1145, 758], [1152, 767], [1158, 767], [1165, 755],
  [1170, 745], [1178, 739], [1183, 735], [1187, 738], [1191, 722], [1196, 700], [1200, 680], [1206, 680], [1210, 689],
  [1218, 690], [1225, 689], [1235, 688], [1240, 695], [1245, 701], [1255, 708], [1260, 717], [1267, 728], [1273, 728],
  [1280, 730], [1283, 742], [1288, 757], [1295, 774], [1300, 762], [1304, 738], [1310, 708]];

function drawStoch() {
  let s = "";
  [656, 720, 784].forEach(y => s += line(y == 656 ? 130 : 41, y + .5, 1360, y + .5, "#444", 1, "1 4"));
  months.forEach(([x]) => s += line(x + .5, 646, x + .5, 794, "#444", 1, "1 5"));
  s += line(38, 688.5, 1363, 688.5) + line(38, 752.5, 1363, 752.5);
  // %D is the three bar average of %K
  const d = [[40, 738]];
  for (let x = 45; x <= 1310; x += 5) d.push([x, (at(k, x) + at(k, x - 5) + at(k, x - 10)) / 3]);
  s += `<polyline points="${k.join(" ")}" fill="none" stroke="${BLUE}" stroke-width="2"/>`;
  s += `<polyline points="${d.join(" ")}" fill="none" stroke="${RED}" stroke-width="2"/>`;
  [[215, 20], [525, 105], [1230, 25]].forEach(([x, w]) => s += box(x, 645, w, 4, BLACK));
  [[280, 60], [965, 60]].forEach(([x, w]) => s += box(x, 792, w, 4, BLACK));
  s += text(40, 652, "Stoch 14, 3, 3", "#222", "start");
  s += box(38, 643, 1325, 1, "#333") + box(38, 643, 1, 154, "#555") + box(1362, 643, 1, 154, BLACK);
  put("stoch", s);
}

function drawStochAxis() {
  let s = box(1363, 644, 44, 152, "#eee");
  for (let y = 662.5; y < 794; y += 6.4) s += line(1363, y, 1365, y);
  [688, 752].forEach(y => s += line(1363, y + .5, 1367, y + .5));
  s += line(1363, 720.5, 1369, 720.5) + text(1370, 720, "50.00", "#222", "start");
  s += line(1363, 784.5, 1369, 784.5) + text(1370, 784, "0.00", "#222", "start");
  s += box(1362.5, 644.5, 45, 15, "#ffffe4", BLACK) + text(1385, 652, "103.73", "#222");
  s += box(1363, 643, 45, 2, BLACK) + box(1407, 643, 1, 154, BLACK) + box(1363, 795, 45, 2, BLACK);
  put("stochAxis", s);
}

function drawTime() {
  let s = box(38.5, 819.5, 1324, 18, "#eee", "#222");
  months.forEach(([x, name]) => s += line(x + .5, 821, x + .5, 837) + text(x + 2, 829, name, "#222", "start"));
  s += box(1072.5, 821.5, 55, 15, "#ffffe4", BLACK) + text(1100, 829, "02/25/14", "#222");
  put("time", s);
}

drawPrice();
drawPriceAxis();
drawStoch();
drawStochAxis();
drawTime();
```
